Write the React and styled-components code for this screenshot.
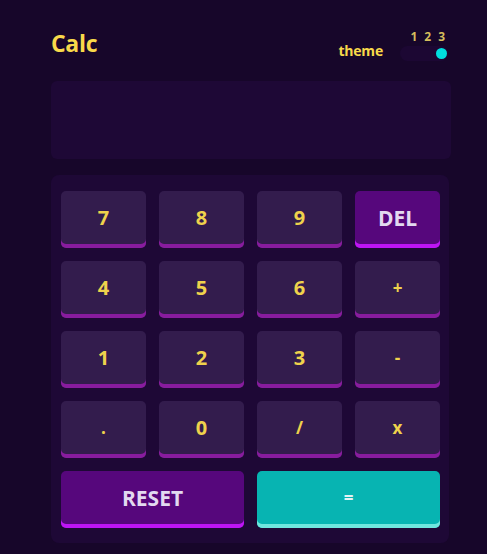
import styled, { createGlobalStyle } from 'styled-components';

const GlobalStyle = createGlobalStyle`
	html, body {
		margin: 0;
		padding: 0;
		background: #17062a;
	}

	body {
		font-family: 'Open Sans', 'Liberation Sans', sans-serif;
	}
`;

const keyColors = {
	digit: { bg: '#331c4d', shadow: '#881c9e', text: '#efd24c' },
	action: { bg: '#56077c', shadow: '#be15f4', text: '#e2d9f0' },
	equals: { bg: '#07b4b2', shadow: '#6fe6de', text: '#e4f2f4' },
};

const keys = [
	{ label: '7' },
	{ label: '8' },
	{ label: '9' },
	{ label: 'DEL', kind: 'action' },
	{ label: '4' },
	{ label: '5' },
	{ label: '6' },
	{ label: '+' },
	{ label: '1' },
	{ label: '2' },
	{ label: '3' },
	{ label: '-' },
	{ label: '.' },
	{ label: '0' },
	{ label: '/' },
	{ label: 'x' },
	{ label: 'RESET', kind: 'action', wide: true },
	{ label: '=', kind: 'equals', wide: true },
];

const symbols = ['+', '-', 'x', '/', '=', '.'];

const Page = styled.div`
	min-height: 554px;
	box-sizing: border-box;
	padding: 31px 0 0 51px;
`;

const Calculator = styled.div`
	width: 400px;
`;

const Header = styled.header`
	display: flex;
	justify-content: space-between;
	align-items: flex-start;
	height: 30px;
	padding-right: 3px;
`;

const Title = styled.h1`
	margin: 0;
	font-size: 23px;
	line-height: 24px;
	font-weight: 700;
	color: #f8d94a;
	letter-spacing: -0.3px;
`;

const ThemeSwitch = styled.div`
	display: flex;
	align-items: flex-end;
	gap: 17px;
	height: 30px;
`;

const ThemeLabel = styled.span`
	font-size: 14px;
	line-height: 14px;
	font-weight: 700;
	color: #f8d94a;
	margin-bottom: 3px;
	letter-spacing: -0.2px;
`;

const ToggleColumn = styled.div`
	display: flex;
	flex-direction: column;
	gap: 3px;
`;

const Numbers = styled.div`
	display: flex;
	justify-content: flex-end;
	gap: 7px;
	padding-right: 3px;
	font-size: 12px;
	line-height: 13px;
	font-weight: 700;
	color: #d4bd5c;
`;

const Track = styled.div`
	display: flex;
	justify-content: flex-end;
	align-items: center;
	width: 48px;
	height: 15px;
	box-sizing: border-box;
	padding: 0 1px;
	border-radius: 8px;
	background: #1c0733;
`;

const Dot = styled.span`
	width: 11px;
	height: 11px;
	border-radius: 50%;
	background: #00dede;
`;

const Screen = styled.div`
	margin-top: 20px;
	height: 78px;
	border-radius: 6px;
	background: #1e0836;
`;

const Keypad = styled.div`
	margin-top: 16px;
	width: 398px;
	box-sizing: border-box;
	padding: 16px 9px 15px 10px;
	border-radius: 8px;
	background: #1e0836;
	display: grid;
	grid-template-columns: repeat(4, 1fr);
	gap: 13px;
`;

const Key = styled.button`
	grid-column: ${({ $wide }) => ($wide ? 'span 2' : 'auto')};
	height: 57px;
	padding: 0 0 4px;
	border: none;
	border-radius: 5px;
	background: ${({ $kind }) => keyColors[$kind].bg};
	box-shadow: inset 0 -4px 0 ${({ $kind }) => keyColors[$kind].shadow};
	color: ${({ $kind }) => keyColors[$kind].text};
	font-family: inherit;
	font-size: ${({ $size }) => $size};
	font-weight: 700;
	cursor: pointer;
`;

const sizeFor = (key) => {
	if (key.kind === 'action') return '21px';
	if (symbols.includes(key.label)) return '17px';
	return '20px';
};

export default function App() {
	return (
		<Page>
			<GlobalStyle />
			<Calculator>
				<Header>
					<Title>Calc</Title>
					<ThemeSwitch>
						<ThemeLabel>theme</ThemeLabel>
						<ToggleColumn>
							<Numbers>
								<span>1</span>
								<span>2</span>
								<span>3</span>
							</Numbers>
							<Track>
								<Dot />
							</Track>
						</ToggleColumn>
					</ThemeSwitch>
				</Header>
				<Screen />
				<Keypad>
					{keys.map((key) => (
						<Key
							key={key.label}
							$kind={key.kind || 'digit'}
							$wide={key.wide}
							$size={sizeFor(key)}
						>
							{key.label}
						</Key>
					))}
				</Keypad>
			</Calculator>
		</Page>
	);
}
